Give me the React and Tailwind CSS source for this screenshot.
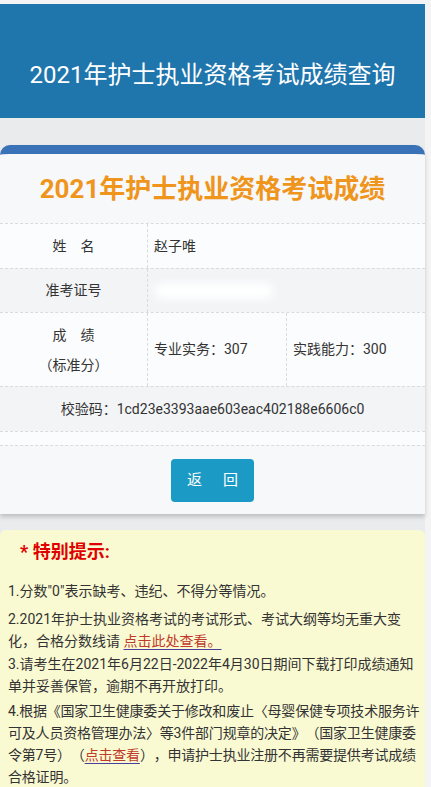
const FONT = "font-['Roboto','Noto_Sans_CJK_SC',sans-serif]";

const ROW = "flex border-t border-dashed border-[#d9dcdf]";

function Link({ children }) {
  return (
    <span className="text-[#c0392b] underline decoration-[#4b3f9a] underline-offset-[3px]">
      {children}
    </span>
  );
}

export default function App() {
  return (
    <div className={`w-[431px] min-h-[787px] bg-[#f4f4f4] pt-1 ${FONT}`}>
      <div className="w-[425px] bg-[#eaebed] pb-2">
        {/* Header */}
        <header className="h-[114px] bg-[#1f76ad] flex items-end justify-center pb-[26px]">
          <h1 className="text-white text-[24px] leading-[34px] font-normal">
            2021年护士执业资格考试成绩查询
          </h1>
        </header>

        {/* Result card */}
        <section className="mt-[27px] bg-[#f6f8fa] rounded-t-[10px] border-t-[9px] border-[#3a72b8] shadow-[0_3px_4px_rgba(0,0,0,0.18)]">
          <div className="h-[69px] flex items-center justify-center">
            <h2 className="text-[#f0951c] text-[26px] leading-[36px] font-bold">
              2021年护士执业资格考试成绩
            </h2>
          </div>

          <div className="text-[14px] text-[#333]">
            <div className={`${ROW} h-[45px] bg-[#fbfcfd]`}>
              <div className="w-[147px] flex items-center justify-center">姓　名</div>
              <div className="flex-1 flex items-center pl-[6px] border-l border-dashed border-[#d9dcdf]">
                赵子唯
              </div>
            </div>
            <div className={`${ROW} h-[44px] bg-[#f2f4f6]`}>
              <div className="w-[147px] flex items-center justify-center">准考证号</div>
              <div className="flex-1 flex items-center pl-[6px] border-l border-dashed border-[#d9dcdf]">
                <span className="w-[120px] h-[16px] bg-white rounded-full blur-[5px]" />
              </div>
            </div>
            <div className={`${ROW} h-[74px] bg-[#fbfcfd]`}>
              <div className="w-[147px] flex flex-col items-center justify-center leading-[30px]">
                <span>成　绩</span>
                <span>（标准分）</span>
              </div>
              <div className="w-[139px] flex items-center pl-[6px] border-l border-dashed border-[#d9dcdf]">
                专业实务：307
              </div>
              <div className="flex-1 flex items-center pl-[6px] border-l border-dashed border-[#d9dcdf]">
                实践能力：300
              </div>
            </div>
            <div className={`${ROW} h-[45px] bg-[#f2f4f6] items-center justify-center`}>
              校验码：1cd23e3393aae603eac402188e6606c0
            </div>
            <div className={`${ROW} h-[14px] bg-[#fbfcfd]`} />
          </div>

          <div className="border-t border-dashed border-[#d9dcdf] pt-[13px] pb-[12px] flex justify-center">
            <button className="w-[83px] h-[43px] rounded-[4px] bg-[#1b9ac5] text-white text-[15px] tracking-[3px] pl-[3px]">
              返　回
            </button>
          </div>
        </section>

        {/* Notice */}
        <section className="mt-4 bg-[#fafad2] rounded-t-md pl-2 pr-1 pt-[9px] pb-2 text-[14px] leading-[22px] text-[#333] [text-spacing-trim:space-all]">
          <h3 className="pl-3 text-[18px] leading-[26px] font-bold text-[#e00000]">
            * 特别提示:
          </h3>
          <p className="mt-[15px]">1.分数"0"表示缺考、违纪、不得分等情况。</p>
          <p className="mt-[6px]">
            2.2021年护士执业资格考试的考试形式、考试大纲等均无重大变
            <br />
            化，合格分数线请 <Link>点击此处查看。</Link>
          </p>
          <p className="mt-[1px]">
            3.请考生在2021年6月22日-2022年4月30日期间下载打印成绩通知
            <br />
            单并妥善保管，逾期不再开放打印。
          </p>
          <p className="mt-[3px] tracking-[-0.2px] whitespace-nowrap">
            4.根据《国家卫生健康委关于修改和废止〈母婴保健专项技术服务许
            <br />
            可及人员资格管理办法〉等3件部门规章的决定》（国家卫生健康委
            <br />
            令第7号）（<Link>点击查看</Link>），申请护士执业注册不再需要提供考试成绩
            <br />
            合格证明。
          </p>
        </section>
      </div>
    </div>
  );
}
